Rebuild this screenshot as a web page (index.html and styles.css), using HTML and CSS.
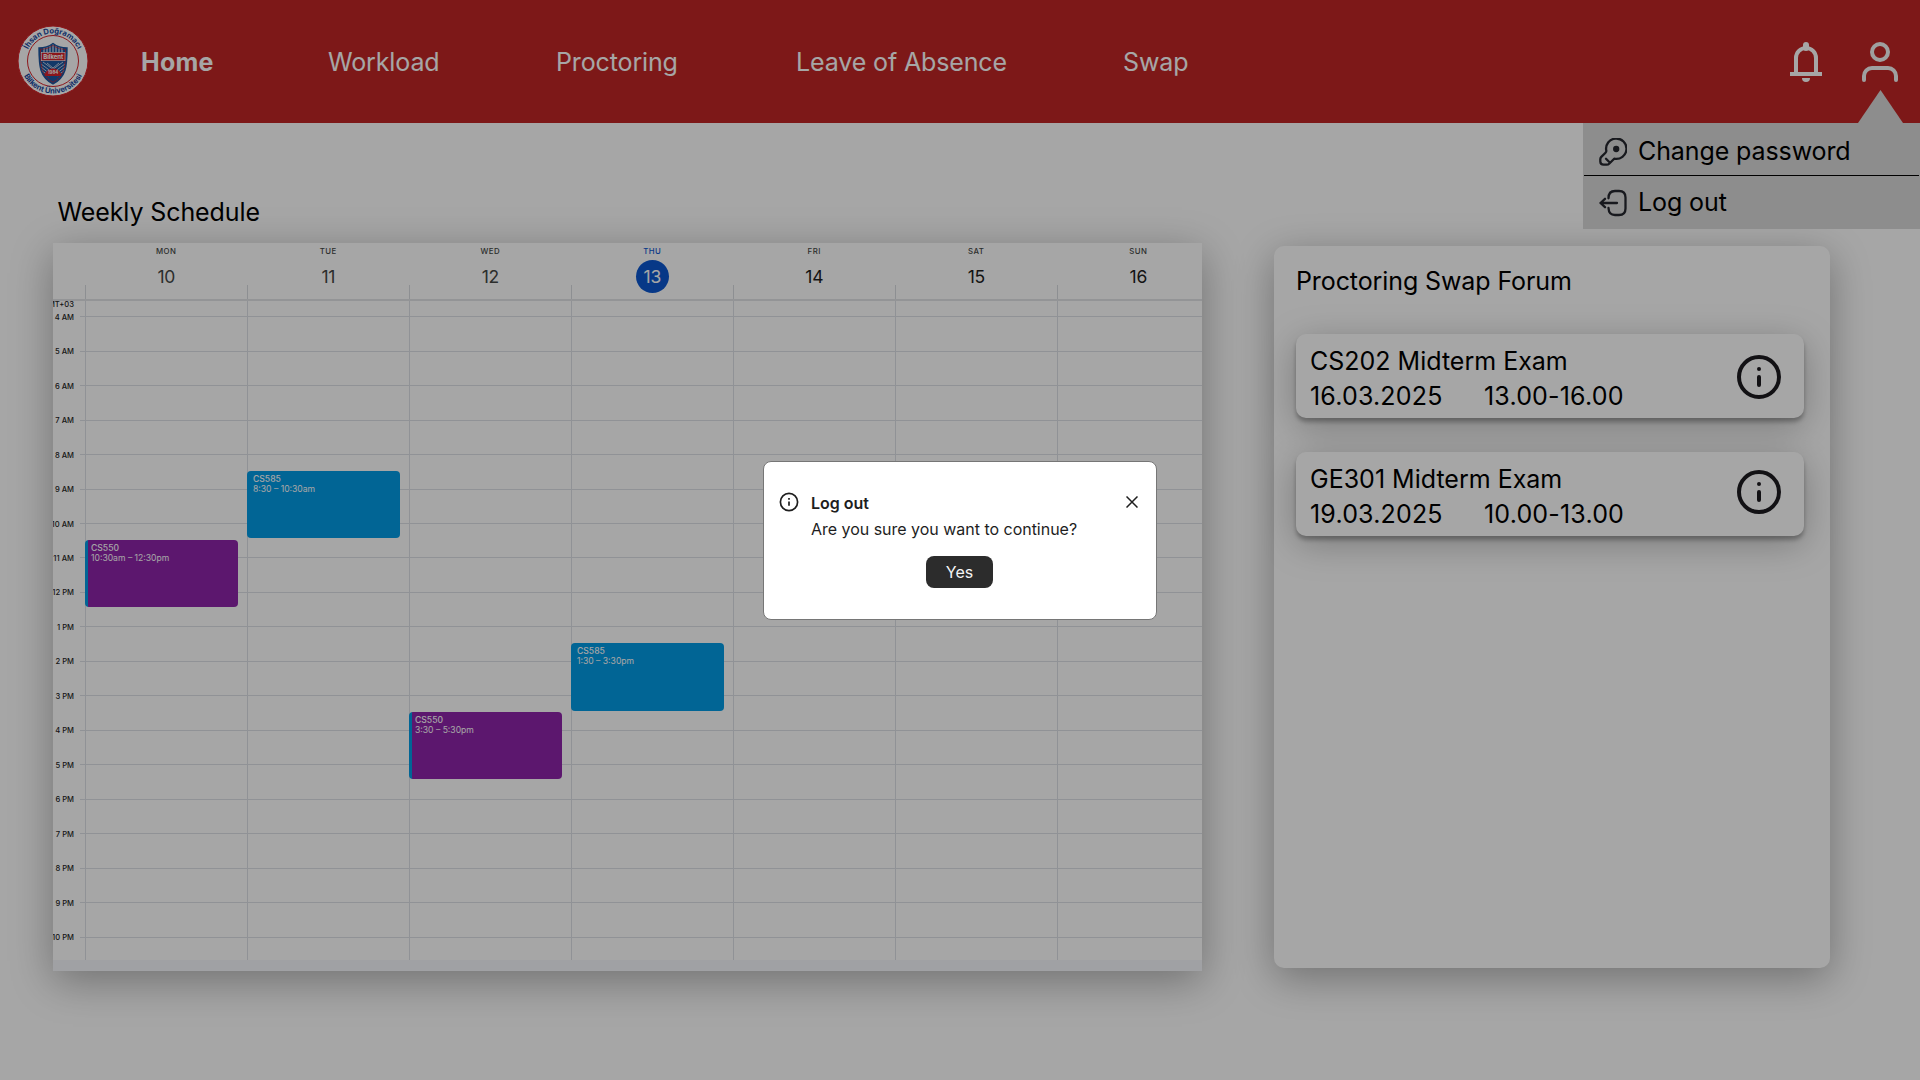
FILE: index.html
```html
<!DOCTYPE html>
<html lang="en">
<head>
<meta charset="utf-8">
<title>Home</title>
<link rel="stylesheet" href="styles.css">
</head>
<body>
<div class="app">
  <header class="topbar">
    <svg class="logo" viewBox="0 0 72 72">
      <defs>
        <path id="arc-top" d="M8.500 36a27.500 27.500 0 0 1 55 0"/>
        <path id="arc-bottom" d="M3.500 36a32.500 32.500 0 0 0 65 0"/>
        <clipPath id="shield-clip"><path d="M22 23q8 0 14-4.500q6 4.500 14 4.500c0 19-1 29-14 36c-13-7-14-17-14-36z"/></clipPath>
      </defs>
      <circle cx="36" cy="36" r="35" fill="#fff" stroke="#d8232a" stroke-width="1"/>
      <circle cx="36" cy="36" r="25.500" fill="#fff" stroke="#d8232a" stroke-width="1"/>
      <text class="seal-text"><textPath href="#arc-top" startOffset="50%" text-anchor="middle">İhsan Doğramacı</textPath></text>
      <text class="seal-text"><textPath href="#arc-bottom" startOffset="50%" text-anchor="middle">Bilkent Üniversitesi</textPath></text>
      <g clip-path="url(#shield-clip)">
        <rect x="20" y="16" width="32" height="44" fill="#1c57a0"/>
        <path d="M27 22v8M30 21v8M33 20v8M36 19v8M39 20v8M42 21v8M45 22v8" stroke="#fff" stroke-width="1"/>
        <path d="M24 39l11 8M24 42l9 7M24 45l8 6M26 37l11 8M48 39l-11 8M48 42l-9 7M48 45l-8 6M46 37l-11 8M30 38l6 5 6-5" stroke="#dfe7f2" stroke-width=".8" fill="none"/>
        <path d="M27.500 51a8.500 7.500 0 0 1 17 0z" fill="#d8232a"/>
      </g>
      <path d="M22 23q8 0 14-4.500q6 4.500 14 4.500c0 19-1 29-14 36c-13-7-14-17-14-36z" fill="none" stroke="#1c57a0" stroke-width="1.400"/>
      <path d="M23.500 24.300q7 0 12.500-4q5.500 4 12.500 4c0 17-1 26.500-12.500 33c-11.500-6.500-12.500-16-12.500-33z" fill="none" stroke="#d8232a" stroke-width="1" stroke-dasharray="1.600 .7"/>
      <rect x="24.500" y="27.500" width="23.500" height="8.200" fill="#d8232a" stroke="#fff" stroke-width=".6"/>
      <text x="36.200" y="34" class="seal-name">Bilkent</text>
      <text x="36" y="49.200" class="seal-year">1984</text>
    </svg>
    <nav class="nav">
      <a class="nav-link active">Home</a>
      <a class="nav-link">Workload</a>
      <a class="nav-link">Proctoring</a>
      <a class="nav-link">Leave of Absence</a>
      <a class="nav-link">Swap</a>
    </nav>
    <div class="actions">
      <svg class="bell" viewBox="0 0 32 40" fill="none" stroke="#fff" stroke-width="4">
        <path d="M0 32h32M6 32V16a10 10 0 0 1 20 0v16"/>
        <path d="M16 6V3" stroke-width="6" stroke-linecap="round"/>
        <path d="M12 36h8a4 4 0 0 1-8 0z" fill="#fff" stroke="none"/>
      </svg>
      <svg class="user" viewBox="0 0 36 40" fill="none" stroke="#f5f5f5" stroke-width="4">
        <circle cx="18" cy="10" r="8"/>
        <path d="M2 38v-4a8 8 0 0 1 8-8h16a8 8 0 0 1 8 8v4" stroke-linecap="round"/>
      </svg>
    </div>
    <div class="account-menu">
      <span class="pointer"></span>
      <div class="menu-item">
        <svg class="menu-icon" viewBox="0 0 28 28" fill="none" stroke="#25272e" stroke-width="2.300" stroke-linecap="round" stroke-linejoin="round">
          <path d="M7.300 12.800a10.200 10.200 0 1 1 7.900 7.900l-4.800 4.800q-1.300 1.300-3 1.200H4.600Q1.400 26.700 1.300 23.500V21.200q0-1.300 1-2.300l4.200-4.200q.9-.8.800-1.900z"/>
          <path d="M7 20.800l3 3"/>
          <circle cx="17.200" cy="11" r="2" fill="#25272e"/>
        </svg>
        <span>Change password</span>
      </div>
      <div class="menu-item">
        <svg class="menu-icon" viewBox="0 0 28 28" fill="none" stroke="#25272e" stroke-width="2.300" stroke-linecap="round" stroke-linejoin="round">
          <path d="M9.500 9.300C9.500 4 11.500 2 16 2h4q6.500 0 6.500 6.500v11Q26.500 26 20 26h-4c-4.500 0-6.300-2-6.500-7M18 14H1.500M6 9.800L1.500 14l4.500 4.200"/>
        </svg>
        <span>Log out</span>
      </div>
    </div>
  </header>

  <main class="content">
    <section class="schedule">
      <h2 class="heading">Weekly Schedule</h2>
      <div class="calendar">
        <div class="days">
          <div class="day"><span class="dow">MON</span><span class="date muted">10</span></div>
          <div class="day"><span class="dow">TUE</span><span class="date muted">11</span></div>
          <div class="day"><span class="dow">WED</span><span class="date muted">12</span></div>
          <div class="day today"><span class="dow">THU</span><span class="date">13</span></div>
          <div class="day"><span class="dow">FRI</span><span class="date">14</span></div>
          <div class="day"><span class="dow">SAT</span><span class="date">15</span></div>
          <div class="day"><span class="dow">SUN</span><span class="date">16</span></div>
        </div>
        <div class="slots" id="slots">
          <span class="zone">GMT+03</span>
          <div class="event blue tue-0830"><b>CS585</b><span>8:30 – 10:30am</span></div>
          <div class="event purple mon-1030"><b>CS550</b><span>10:30am – 12:30pm</span></div>
          <div class="event blue thu-1330"><b>CS585</b><span>1:30 – 3:30pm</span></div>
          <div class="event purple wed-1530"><b>CS550</b><span>3:30 – 5:30pm</span></div>
        </div>
        <div class="footer-strip"></div>
      </div>
    </section>

    <aside class="forum">
      <h2 class="forum-title">Proctoring Swap Forum</h2>
      <article class="swap-card">
        <div class="swap-info">
          <span class="exam">CS202 Midterm Exam</span>
          <span class="when"><span>16.03.2025</span><span>13.00-16.00</span></span>
        </div>
        <svg class="info" viewBox="0 0 44 44" fill="none" stroke="#1d1b20" stroke-width="4" stroke-linecap="round"><circle cx="22" cy="22" r="20"/><path d="M22 22v8M22 14v.1"/></svg>
      </article>
      <article class="swap-card">
        <div class="swap-info">
          <span class="exam">GE301 Midterm Exam</span>
          <span class="when"><span>19.03.2025</span><span>10.00-13.00</span></span>
        </div>
        <svg class="info raised" viewBox="0 0 44 44" fill="none" stroke="#1d1b20" stroke-width="4" stroke-linecap="round"><circle cx="22" cy="22" r="20"/><path d="M22 22v8M22 14v.1"/></svg>
      </article>
    </aside>
  </main>
</div>

<div class="overlay">
  <div class="dialog" role="dialog">
    <svg class="dialog-icon" viewBox="0 0 20 20" fill="none" stroke="#1e1e1e" stroke-width="1.700"><circle cx="10" cy="10" r="8.600"/><path d="M10 9.500v4.300M10 6v1.700"/></svg>
    <div class="dialog-body">
      <strong>Log out</strong>
      <p>Are you sure you want to continue?</p>
      <button class="yes">Yes</button>
    </div>
    <svg class="close" viewBox="0 0 12 12" fill="none" stroke="#1e1e1e" stroke-width="1.500"><path d="M.5.5l11 11M11.500.5l-11 11"/></svg>
  </div>
</div>
<script src="calendar.js"></script>
</body>
</html>
```
FILE: styles.css
```css
* { box-sizing: border-box; }

body {
  margin: 0;
  background: #fff;
  color: #000;
  font-family: "Inter", sans-serif;
  font-size: 25px;
}

.app {
  width: 1920px;
  height: 1080px;
  overflow: hidden;
}

.topbar {
  position: relative;
  display: flex;
  align-items: center;
  height: 123px;
  padding-left: 17px;
  background: #c02625;
}

.logo { width: 72px; height: 72px; margin-top: -1px; }

.seal-text {
  font: 700 7.6px "Inter", sans-serif;
  fill: #17479e;
}

.seal-name, .seal-year {
  font: 700 6px "Inter", sans-serif;
  fill: #fff;
  text-anchor: middle;
}

.seal-year { font-size: 4.4px; }

.nav {
  display: grid;
  grid-template-columns: 187px 228px 240px 327px auto;
  margin-left: 52px;
  color: #fff;
  letter-spacing: -.13px;
}

.active { font-weight: 700; letter-spacing: .2px; }

.actions {
  display: flex;
  gap: 40px;
  margin-left: auto;
  padding-right: 22px;
}

.bell { width: 32px; height: 40px; }
.user { width: 36px; height: 40px; }

.account-menu {
  position: absolute;
  z-index: 2;
  top: 123px;
  right: 0;
  width: 337px;
  height: 106px;
  padding: 0 1px;
  background: #d9d9d9;
  letter-spacing: -.1px;
}

.pointer {
  position: absolute;
  top: -33px;
  right: 17px;
  width: 45px;
  height: 33px;
  background: #d9d9d9;
  clip-path: polygon(50% 0, 100% 100%, 0 100%);
}

.menu-item {
  display: flex;
  align-items: center;
  height: 52px;
  gap: 11px;
  padding: 4px 0 0 15px;
}

.menu-item + .menu-item {
  border-top: 1px solid #000;
  padding-top: 0;
}

.menu-icon { width: 28px; height: 28px; margin-top: 2px; }

.content {
  display: flex;
  gap: 72px;
  align-items: flex-start;
  padding: 74px 0 0 53px;
}

.heading, .forum-title {
  margin: 0;
  font-size: 25px;
  font-weight: 400;
  line-height: 30px;
  letter-spacing: -.1px;
}

.heading { padding-left: 4.500px; margin-bottom: 16px; }

.schedule { width: 1149px; }

.calendar {
  height: 728px;
  overflow: hidden;
  background: #fff;
  box-shadow: 0 10px 40px rgba(0, 0, 0, .32);
}

.calendar, .days, .slots { color: #1f1f1f; }

.days {
  display: flex;
  width: 1166px;
  height: 58px;
  padding-left: 32px;
  border-bottom: 2px solid #e2e3e6;
}

.day {
  display: flex;
  flex-direction: column;
  align-items: center;
  width: 162px;
  padding-left: .5px;
  background: linear-gradient(#d9dce1, #d9dce1) left bottom / 1px 14px no-repeat;
}

.dow {
  margin-top: 3px;
  font-size: 7.8px;
  font-weight: 500;
  letter-spacing: .5px;
  line-height: 10px;
  color: #444746;
}

.date {
  width: 33px;
  height: 33px;
  margin-top: 4px;
  border-radius: 50%;
  font-size: 17.5px;
  line-height: 33px;
  letter-spacing: -.3px;
  text-align: center;
}

.muted { color: #444746; }
.today .dow { color: #0b57d0; }
.today .date { background: #0b57d0; color: #fff; }

.slots {
  display: grid;
  grid-template-columns: 27px 5.300px repeat(7, 162px);
  grid-template-rows: 15.200px repeat(36, 17.235px) 23px;
  width: 1166px;
  height: 659px;
}

.zone, .hour {
  grid-column: 1;
  justify-self: end;
  margin-right: 6px;
  font-size: 7.6px;
  font-weight: 500;
  line-height: 9px;
  white-space: nowrap;
}

.zone { grid-row: 1; margin-top: -1px; }
.hour { margin-top: -3.500px; }

.hour-line {
  grid-column: 2 / -1;
  border-top: 1px solid #dde1e6;
}

.day-line {
  grid-row: 1 / -1;
  border-left: 1px solid #dde1e6;
}

.event {
  z-index: 1;
  display: flex;
  flex-direction: column;
  width: 153px;
  height: 67.500px;
  margin-top: -.6px;
  padding: 3px 0 0 5.700px;
  border-radius: 4px;
  color: #fff;
  font-size: 8.600px;
  line-height: 10.200px;
}

.event b { font-weight: 500; }
.blue { background: #039be5; }
.purple { background: linear-gradient(90deg, #039be5 3px, #8e24aa 3px); }

.mon-1030 { grid-area: 15 / 3 / span 4; }
.tue-0830 { grid-area: 11 / 4 / span 4; }
.wed-1530 { grid-area: 25 / 5 / span 4; }
.thu-1330 { grid-area: 21 / 6 / span 4; }

.footer-strip { height: 11px; background: #f6f8fc; }

.forum {
  width: 556px;
  height: 722px;
  margin-top: 49px;
  padding: 20px 26px 0 22px;
  border-radius: 10px;
  background: #fff;
  box-shadow: 0 10px 40px rgba(0, 0, 0, .32);
}

.forum-title { margin-bottom: 38px; }

.swap-card {
  display: flex;
  justify-content: space-between;
  align-items: center;
  height: 84px;
  margin-bottom: 34px;
  padding: 0 23px 0 14px;
  border-radius: 10px;
  background: #fff;
  box-shadow: 0 4px 4px rgba(0, 0, 0, .28), 0 8px 36px rgba(0, 0, 0, .26);
}

.swap-info { padding-top: 6px; line-height: 35px; }
.exam { display: block; }
.when { display: grid; grid-template-columns: 174px auto; letter-spacing: .18px; }
.info { width: 44px; height: 44px; margin-top: 2px; }
.raised { margin-top: -4px; }

.overlay {
  position: fixed;
  inset: 0;
  z-index: 10;
  display: flex;
  justify-content: center;
  align-items: center;
  background: rgba(0, 0, 0, .35);
}

.dialog {
  display: flex;
  align-items: flex-start;
  width: 394px;
  height: 159px;
  margin-top: 1px;
  padding: 30px 18px 0 14.500px;
  border: 1px solid #767676;
  border-radius: 8px;
  background: #fff;
  color: #1e1e1e;
  font-size: 16px;
}

.dialog-icon { width: 20px; height: 20px; }

.dialog-body {
  display: flex;
  flex-direction: column;
  width: 300px;
  margin-left: 12.500px;
}

.dialog-body strong { font-weight: 600; line-height: 22px; }
.dialog-body p { margin: 4px 0 0; line-height: 22px; letter-spacing: -.02px; }

.yes {
  align-self: flex-start;
  width: 67px;
  height: 32px;
  margin: 16px 0 0 115px;
  padding: 0;
  border: 0;
  border-radius: 8px;
  background: #2c2c2c;
  color: #f5f5f5;
  font: 16px "Inter", sans-serif;
}

.close { width: 12px; height: 12px; margin: 4px 0 0 auto; }
```
FILE: calendar.js
```js
const slots = document.getElementById('slots');

for (let h = 4; h <= 22; h++) {
  const row = 2 + (h - 4) * 2;
  const label = document.createElement('span');
  label.className = 'hour';
  label.textContent = (h > 12 ? h - 12 : h) + (h < 12 ? ' AM' : ' PM');
  label.style.gridRow = row;
  const line = document.createElement('div');
  line.className = 'hour-line';
  line.style.gridRow = row;
  slots.append(line, label);
}

for (let d = 0; d < 7; d++) {
  const line = document.createElement('div');
  line.className = 'day-line';
  line.style.gridColumn = 3 + d;
  slots.append(line);
}
```
